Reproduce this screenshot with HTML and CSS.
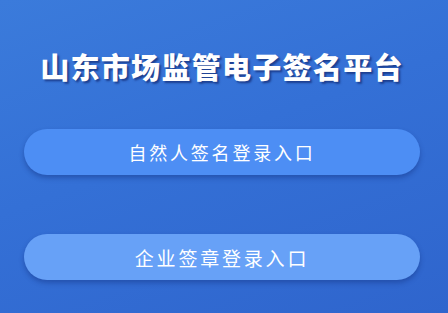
FILE: index.html
```html
<!DOCTYPE html>
<html lang="zh">
<head>
<meta charset="utf-8">
<link rel="stylesheet" href="styles.css">
</head>
<body>
<main class="page">
  <h1 class="title">山东市场监管电子签名平台</h1>
  <div class="entries">
    <a class="entry entry-person">自然人签名登录入口</a>
    <a class="entry entry-company">企业签章登录入口</a>
  </div>
</main>
</body>
</html>
```
FILE: styles.css
```css
html, body {
  margin: 0;
  padding: 0;
}
body {
  width: 448px;
  height: 313px;
  overflow: hidden;
  font-family: "Noto Sans CJK SC", "Noto Sans", sans-serif;
}
.page {
  width: 448px;
  height: 313px;
  box-sizing: border-box;
  background: linear-gradient(160deg, #3b7bdb 0%, #3470d6 45%, #2f65cd 100%);
  display: flex;
  flex-direction: column;
  align-items: center;
  padding-top: 47px;
  padding-right: 4px;
}
.title {
  margin: 0;
  color: #ffffff;
  font-size: 29px;
  font-weight: 900;
  letter-spacing: 1.3px;
  line-height: 38px;
  text-shadow: 2px 2px 2px rgba(20, 45, 120, 0.75);
}
.entries {
  margin-top: 44px;
  display: flex;
  flex-direction: column;
  gap: 59px;
}
.entry {
  display: flex;
  align-items: center;
  justify-content: center;
  width: 396px;
  height: 46px;
  border-radius: 23px;
  color: #ffffff;
  font-size: 18px;
  letter-spacing: 2.8px;
  text-decoration: none;
  box-shadow: 0 3px 5px rgba(20, 50, 130, 0.45);
}
.entry-person {
  background: #4d8ef4;
}
.entry-company {
  background: #67a1f7;
  font-size: 19px;
}
```
